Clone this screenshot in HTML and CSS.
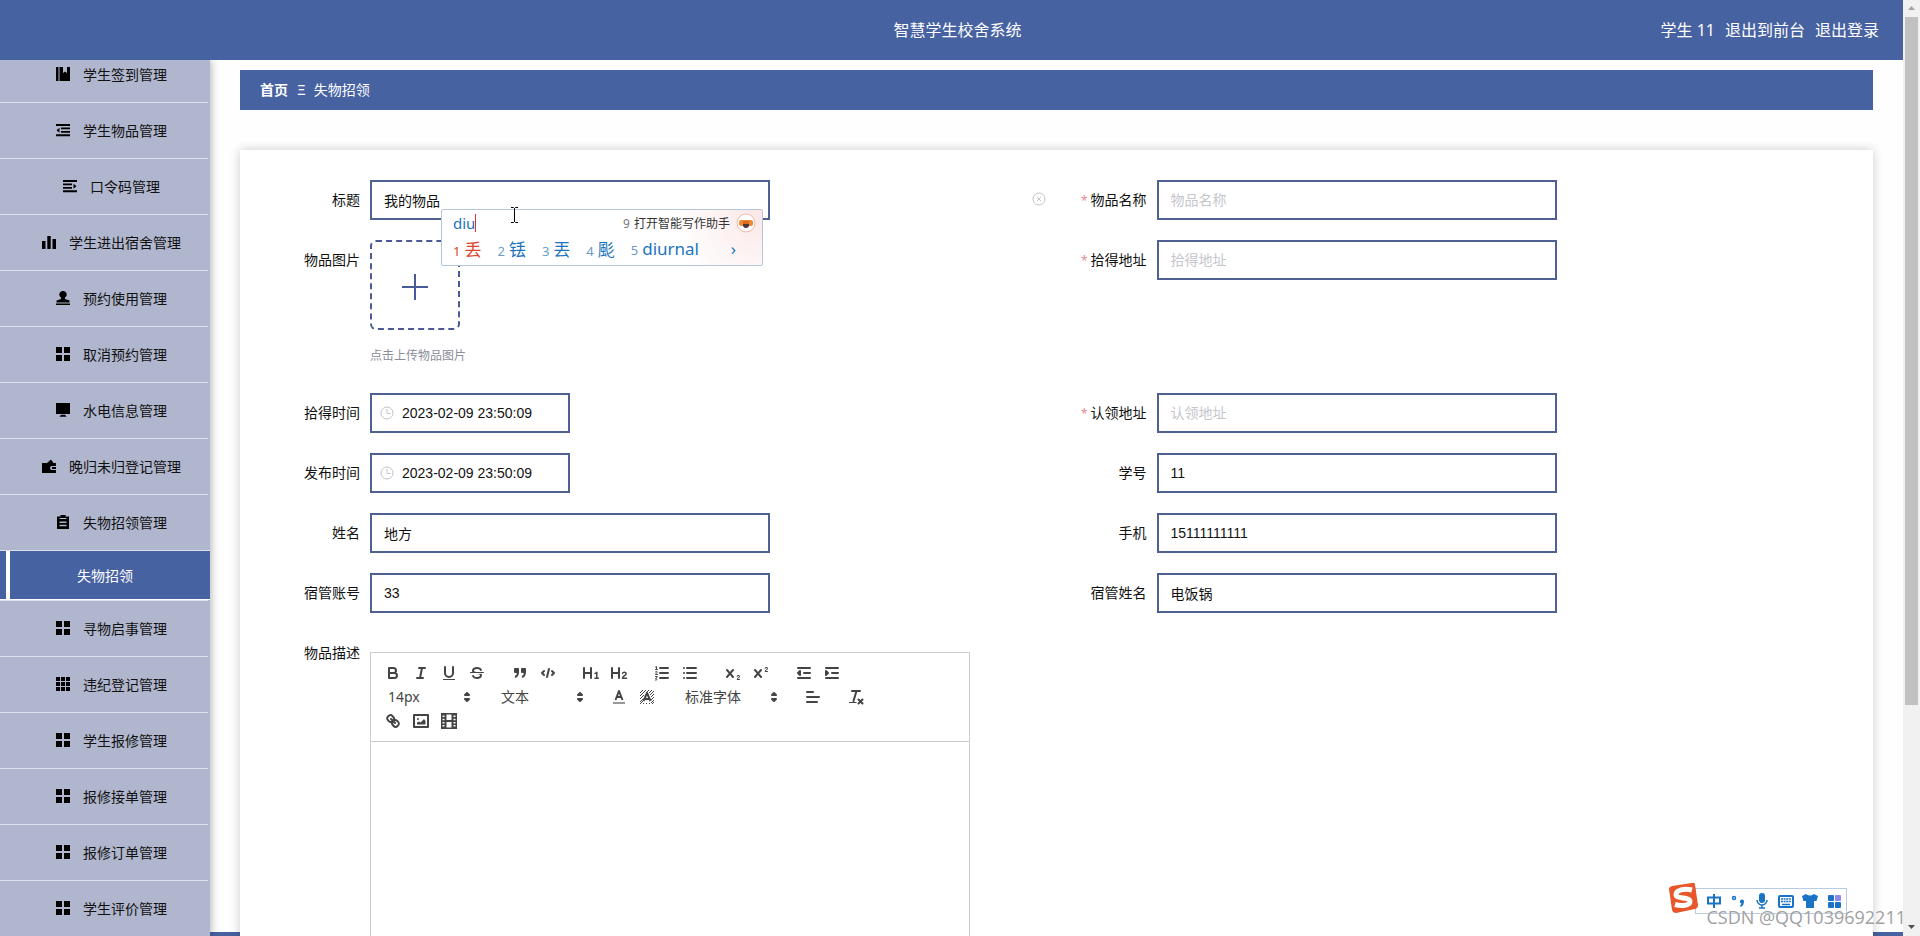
FILE: index.html
```
<!DOCTYPE html>
<html lang="zh-CN">
<head>
<meta charset="utf-8">
<title>智慧学生校舍系统</title>
<link rel="stylesheet" href="styles.css">
</head>
<body>
<svg class="defs" aria-hidden="true">
  <symbol id="grid4" viewBox="0 0 14 14"><path d="M0 0h6v6H0zM8 0h6v6H8zM0 8h6v6H0zM8 8h6v6H8z"/></symbol>
  <symbol id="clock" viewBox="0 0 14 14"><g fill="none" stroke="#c0c4cc"><circle cx="7" cy="7" r="6"/><path d="M7 3v4.500h3.500"/></g></symbol>
  <symbol id="updown" viewBox="0 0 18 18"><path d="M7 11l2 2 2-2zM7 7l2-2 2 2z" fill="#444" stroke="#444" stroke-width="2" stroke-linejoin="round"/></symbol>
</svg>
<div class="app">
  <div class="page">
    <header class="header">
      <span></span>
      <h1 class="title">智慧学生校舍系统</h1>
      <nav class="user"><span>学生 11</span><a href="#">退出到前台</a><a href="#">退出登录</a></nav>
    </header>
    <div class="body">
      <aside class="sidebar">
        <ul class="menu">
          <li><a class="item" href="#"><svg viewBox="0 0 14 14"><path d="M0 0h2.500v14H0zM3.500 0H7v6l2-1.500L11 6V0h3v14H3.500z"/></svg>学生签到管理</a></li>
          <li><a class="item" href="#"><svg viewBox="0 0 14 14"><path d="M0 1h14v2H0zM5 4.500h9v1.700H5zM5 8h9v1.700H5zM0 11.300h14v2H0zM3.500 4.700v5L.5 7.200z"/></svg>学生物品管理</a></li>
          <li><a class="item" href="#"><svg viewBox="0 0 14 14"><path d="M0 1h14v2H0zM0 4.500h9v1.700H0zM0 8h9v1.700H0zM0 11.300h14v2H0zM10.500 4.700v5l3-2.500z"/></svg>口令码管理</a></li>
          <li><a class="item" href="#"><svg viewBox="0 0 14 14"><path d="M0 6h3.500v8H0zM5.300 1h3.400v13H5.300zM10.500 4H14v10h-3.500z"/></svg>学生进出宿舍管理</a></li>
          <li><a class="item" href="#"><svg viewBox="0 0 14 14"><path d="M7 0a3.500 3.500 0 0 1 2 6.500L9 8l4.500 1.500V11.500H.5V9.500L5 8V6.500A3.500 3.500 0 0 1 7 0zM0 12.600h14V14H0z"/></svg>预约使用管理</a></li>
          <li><a class="item" href="#"><svg><use href="#grid4"/></svg>取消预约管理</a></li>
          <li><a class="item" href="#"><svg viewBox="0 0 14 14"><path d="M0 0h14v11H0zM5 11.800h4l1.500 2h-7z"/></svg>水电信息管理</a></li>
          <li><a class="item" href="#"><svg viewBox="0 0 14 14"><path d="M0 4h5l4-3.500L11.500 4H14v3H10a1.800 1.800 0 0 0 0 4h4v3H0zM10 8h4v2h-4z"/></svg>晚归未归登记管理</a></li>
          <li><a class="item" href="#"><svg viewBox="0 0 14 14"><path d="M4.500 0h5v1.500H13V14H1V1.500h3.500zM3.500 3v1h7V3zM3.500 6.500V8h7V6.500zM3.500 9.800v1.500h7V9.800z" fill-rule="evenodd"/></svg>失物招领管理</a>
            <a class="subitem" href="#" aria-current="page">失物招领</a></li>
          <li><a class="item" href="#"><svg><use href="#grid4"/></svg>寻物启事管理</a></li>
          <li><a class="item" href="#"><svg viewBox="0 0 14 14"><path d="M0 0h4v4H0zM5 0h4v4H5zM10 0h4v4h-4zM0 5h4v4H0zM5 5h4v4H5zM10 5h4v4h-4zM0 10h4v4H0zM5 10h4v4H5zM10 10h4v4h-4z"/></svg>违纪登记管理</a></li>
          <li><a class="item" href="#"><svg><use href="#grid4"/></svg>学生报修管理</a></li>
          <li><a class="item" href="#"><svg><use href="#grid4"/></svg>报修接单管理</a></li>
          <li><a class="item" href="#"><svg><use href="#grid4"/></svg>报修订单管理</a></li>
          <li><a class="item" href="#"><svg><use href="#grid4"/></svg>学生评价管理</a></li>
        </ul>
      </aside>
      <main class="main">
        <nav class="crumbs"><a href="#">首页</a><span class="sep">Ξ</span><span>失物招领</span></nav>
        <form class="card">
          <div class="field clearable">
            <label for="f1">标题</label><input id="f1" value="我的物品">
            <button type="button" class="clear" aria-label="清空"><svg viewBox="0 0 14 14"><g fill="none" stroke="#c0c4cc"><circle cx="7" cy="7" r="6"/><path d="M5 5l4 4M9 5l-4 4"/></g></svg></button>
          </div>
          <div class="field required"><label for="f2">物品名称</label><input id="f2" placeholder="物品名称"></div>
          <div class="field"><label for="f3">物品图片</label>
            <div class="upload">
              <button type="button" id="f3" class="drop"><svg viewBox="0 0 26 26"><path d="M13 0v26M0 13h26" stroke="#4a5a96" stroke-width="2"/></svg></button>
              <p class="tip">点击上传物品图片</p>
            </div>
          </div>
          <div class="field required"><label for="f4">拾得地址</label><input id="f4" placeholder="拾得地址"></div>
          <div class="field"><label for="f5">拾得时间</label><div class="date"><svg><use href="#clock"/></svg><input id="f5" value="2023-02-09 23:50:09"></div></div>
          <div class="field required"><label for="f6">认领地址</label><input id="f6" placeholder="认领地址"></div>
          <div class="field"><label for="f7">发布时间</label><div class="date"><svg><use href="#clock"/></svg><input id="f7" value="2023-02-09 23:50:09"></div></div>
          <div class="field"><label for="f8">学号</label><input id="f8" value="11"></div>
          <div class="field"><label for="f9">姓名</label><input id="f9" value="地方"></div>
          <div class="field"><label for="f10">手机</label><input id="f10" value="15111111111"></div>
          <div class="field"><label for="f11">宿管账号</label><input id="f11" value="33"></div>
          <div class="field"><label for="f12">宿管姓名</label><input id="f12" value="电饭锅"></div>
          <div class="field wide"><label for="f13">物品描述</label>
            <div class="editor">
              <div class="toolbar">
                <div class="group">
                  <button type="button" aria-label="粗体"><svg viewBox="0 0 18 18"><path class="s" d="M5 4h4.500a2.500 2.500 0 0 1 0 5H5zM5 9h5.500a2.500 2.500 0 0 1 0 5H5z"/></svg></button>
                  <button type="button" aria-label="斜体"><svg viewBox="0 0 18 18"><path class="s" d="M7 4h6M5 14h6M8 14l2-10"/></svg></button>
                  <button type="button" aria-label="下划线"><svg viewBox="0 0 18 18"><path class="s" d="M5 3v6a4 4 0 0 0 8 0V3"/><rect x="3" y="15" width="12" height="1"/></svg></button>
                  <button type="button" aria-label="删除线"><svg viewBox="0 0 18 18"><path class="s thin" d="M15.500 8.500h-13"/><path d="M9.007 8C6.542 7.791 6 7.519 6 6.500 6 5.792 7.283 5 9 5c1.571 0 2.765.679 2.969 1.309a1 1 0 0 0 1.900-.617C13.356 4.106 11.354 3 9 3 6.200 3 4 4.538 4 6.500a3.200 3.200 0 0 0 .5 1.843zM8.984 10C11.457 10.208 12 10.479 12 11.500 12 12.208 10.717 13 9 13c-1.571 0-2.765-.679-2.969-1.309a1 1 0 1 0-1.900.617C4.644 13.894 6.646 15 9 15c2.800 0 5-1.538 5-3.500a3.200 3.200 0 0 0-.5-1.843z"/></svg></button>
                </div>
                <div class="group">
                  <button type="button" aria-label="引用"><svg viewBox="0 0 18 18"><path stroke="#444" stroke-width="2" stroke-linejoin="round" d="M4 5h3v3H4zM11 5h3v3h-3z"/><path fill="none" stroke="#444" stroke-width="2" d="M7 8c0 4.031-3 5-3 5M14 8c0 4.031-3 5-3 5"/></svg></button>
                  <button type="button" aria-label="代码"><svg viewBox="0 0 18 18"><path class="s" d="M5 7L3 9l2 2M13 7l2 2-2 2M10 5l-2 8"/></svg></button>
                </div>
                <div class="group">
                  <button type="button" aria-label="一级标题"><svg viewBox="0 0 18 18"><path class="s" d="M2 4v10M9 4v10M2 9h7"/><path class="s mid" d="M13 9.500l1.800-1.200v5.900M13 14.200h3.400"/></svg></button>
                  <button type="button" aria-label="二级标题"><svg viewBox="0 0 18 18"><path class="s" d="M2 4v10M9 4v10M2 9h7"/><path class="s mid" d="M12.500 9.300c.7-1.700 3.700-1.500 3.700.400 0 1.800-3.500 2.300-3.700 4.500h4"/></svg></button>
                </div>
                <div class="group">
                  <button type="button" aria-label="有序列表"><svg viewBox="0 0 18 18"><path class="s" d="M7 4h8M7 9h8M7 14h8"/><path class="s thin" d="M2.500 5.500h2M3.500 5.500v-3l-1 .5M4.500 10.500h-2c0-1.500 1.900-1.500 1.900-2.300S3 7.200 2.500 7.800M2.500 14.600c1.800-.5 2.200 1.900 0 1.500M2.500 12.500h1.900l-1 1.500"/></svg></button>
                  <button type="button" aria-label="无序列表"><svg viewBox="0 0 18 18"><path class="s" d="M6 4h9M6 9h9M6 14h9M3 4h0M3 9h0M3 14h0"/></svg></button>
                </div>
                <div class="group">
                  <button type="button" aria-label="下标"><svg viewBox="0 0 18 18"><path d="M15.500 15h-1.639c.2-.500.9-.800 1.300-1.200.500-.4.800-.9.800-1.400 0-.8-.7-1.400-1.600-1.400-.8 0-1.400.400-1.700 1a.5.500 0 1 0 .87.500c.2-.3.500-.5.800-.5.400 0 .7.200.7.500 0 1-2.200 1.100-2.200 3a.5.500 0 0 0 .5.500h2.200a.5.500 0 0 0 0-1zM9.650 5.241a1 1 0 0 0-1.409.108L6 7.964 3.759 5.349a1 1 0 0 0-1.518 1.302L4.683 9.500l-2.442 2.849a1 1 0 0 0 1.518 1.302L6 11.036l2.241 2.615a1 1 0 1 0 1.518-1.302L7.317 9.500l2.442-2.849A1 1 0 0 0 9.650 5.241z"/></svg></button>
                  <button type="button" aria-label="上标"><svg viewBox="0 0 18 18"><path d="M15.500 7h-1.639c.2-.500.9-.800 1.300-1.200.500-.4.800-.9.800-1.400 0-.8-.7-1.400-1.600-1.400-.8 0-1.400.400-1.700 1a.5.500 0 1 0 .87.500c.2-.3.500-.5.800-.5.400 0 .7.200.7.500 0 1-2.200 1.100-2.200 3a.5.500 0 0 0 .5.500h2.200a.5.500 0 0 0 0-1zM9.650 5.241a1 1 0 0 0-1.409.108L6 7.964 3.759 5.349a1 1 0 0 0-1.518 1.302L4.683 9.500l-2.442 2.849a1 1 0 0 0 1.518 1.302L6 11.036l2.241 2.615a1 1 0 1 0 1.518-1.302L7.317 9.500l2.442-2.849A1 1 0 0 0 9.650 5.241z"/></svg></button>
                </div>
                <div class="group">
                  <button type="button" aria-label="减少缩进"><svg viewBox="0 0 18 18"><path class="s" d="M3 14h12M3 4h12M9 9h6M5 7v4L3 9z"/></svg></button>
                  <button type="button" aria-label="增加缩进"><svg viewBox="0 0 18 18"><path class="s" d="M3 14h12M3 4h12M9 9h6M3 7v4l2-2z"/></svg></button>
                </div>
                <div class="group"><button type="button" class="picker">14px<svg><use href="#updown"/></svg></button></div>
                <div class="group"><button type="button" class="picker">文本<svg><use href="#updown"/></svg></button></div>
                <div class="group">
                  <button type="button" aria-label="文字颜色"><svg viewBox="0 0 18 18"><path d="M3 15h12" stroke="#999" stroke-width="2"/><path fill="none" stroke="#444" stroke-width="2" stroke-linejoin="round" d="M5.500 12L9 3l3.500 9M12 9H6"/></svg></button>
                  <button type="button" aria-label="背景颜色"><svg viewBox="0 0 18 18"><path fill="none" stroke="#444" d="M2 5l3-3M2 8l6-6M2 11l4-4M2 14l3-3M2 16l3-3M8 5l3-3M11 5l3-3M13 6l3-3M12 7l4-4M13 9l3-3M13 12l3-3M13 15l3-3M5 16l1-1M8 16l1-1M11 16l1-1M14 16l2-2"/><path fill="none" stroke="#444" stroke-width="2" stroke-linejoin="round" d="M5.500 13L9 5l3.500 8M11.600 11H6.400"/></svg></button>
                </div>
                <div class="group"><button type="button" class="picker font">标准字体<svg><use href="#updown"/></svg></button></div>
                <div class="group"><button type="button" aria-label="对齐"><svg viewBox="0 0 18 18"><path class="s" d="M3 9h12M3 14h10M3 4h6"/></svg></button></div>
                <div class="group"><button type="button" aria-label="清除格式"><svg viewBox="0 0 18 18"><path class="s" d="M5 3h8M6.500 13l3-10M11.500 11.500l4 4M15.500 11.500l-4 4"/><rect x="2" y="14" width="7.500" height="1"/></svg></button></div>
                <div class="group">
                  <button type="button" aria-label="链接"><svg viewBox="0 0 18 18"><path class="s" d="M7 7l4 4M8.900 4.577a3.476 3.476 0 0 1 .360 4.679 3.476 3.476 0 0 1-4.679-.360C3.185 7.500 2.035 6.400 4.217 4.217s3.286-1.036 4.683.360zM13.423 9.100a3.476 3.476 0 0 0-4.679-.360 3.476 3.476 0 0 0 .360 4.679c1.392 1.392 2.500 2.542 4.679.360s1.036-3.283-.360-4.679z"/></svg></button>
                  <button type="button" aria-label="图片"><svg viewBox="0 0 18 18"><path class="s" d="M2 3h14v12H2z"/><circle cx="6" cy="7" r="1"/><path d="M5 12.500v-2l2-1 1.500 1L12 7l1.500 2v3.500z"/></svg></button>
                  <button type="button" aria-label="视频"><svg viewBox="0 0 18 18"><path fill-rule="evenodd" d="M1 1h16v16H1zM6.500 2.500v5.500h5V2.500zM6.500 10v5.500h5V10zM2.500 3.500V5h2V3.500zM2.500 6.700v1.500h2V6.700zM2.500 9.900v1.500h2V9.900zM2.500 13v1.500h2V13zM13.500 3.500V5h2V3.500zM13.500 6.700v1.500h2V6.700zM13.500 9.900v1.500h2V9.900zM13.500 13v1.500h2V13z"/></svg></button>
                </div>
              </div>
              <textarea id="f13" class="text"></textarea>
            </div>
          </div>
        </form>
      </main>
    </div>
  </div>
  <div class="scrollbar">
    <svg viewBox="0 0 17 17"><path d="M5 10l3.500-4 3.500 4z" fill="#a3a3a3"/></svg>
    <div class="thumb"></div>
    <svg viewBox="0 0 17 17"><path d="M5 6l3.500 4L12 6z" fill="#505050"/></svg>
  </div>
</div>

<div class="ime">
  <div class="ime-top"><span class="typed">diu</span><span class="assist"><span class="num">9</span>打开智能写作助手</span>
    <svg viewBox="0 0 20 20"><circle cx="10" cy="10" r="9" fill="#fff" stroke="#f0b8a8"/><rect x="3" y="7" width="14" height="6" rx="2" fill="#ef8a35"/><path d="M7 10h6v2a3 3 0 0 1-6 0z" fill="#4b3440"/><path d="M7 8h6v3H7z" fill="#d96a20"/></svg></div>
  <div class="ime-list"><span class="hot"><i>1</i>丢</span><span><i>2</i>铥</span><span><i>3</i>丟</span><span><i>4</i>颩</span><span><i>5</i>diurnal</span><b>›</b></div>
</div>
<svg class="pointer" viewBox="0 0 9 16"><path d="M1 .5h2.500l1 1 1-1H8M1 15.500h2.500l1-1 1 1H8M4.500 1v14" fill="none" stroke="#000"/></svg>

<div class="sogou">
  <svg class="logo" viewBox="0 0 32 32"><path d="M2 7Q2 5 5 4L25 1q3-1 3 2l3 20q0 3-3 4L9 31q-3 0-4-3z" fill="#e8562a"/><path d="M25 8C17 6 9 8 9 12.500c0 5 14 2 14 7 0 4-8 5-15 3" fill="none" stroke="#fff" stroke-width="5"/></svg>
  <div class="strip">
    <svg viewBox="0 0 16 16"><path d="M2 4.500h12v6H2zM8 1v14" fill="none" stroke="#1a73c4" stroke-width="2"/></svg>
    <svg viewBox="0 0 16 16"><circle cx="4" cy="5" r="1.500" fill="none" stroke="#1a73c4" stroke-width="1.500"/><path d="M10 8a2 2 0 0 1 4 1q0 3-3 5l-1-1 1.500-2.500A2 2 0 0 1 10 8z" fill="#1a73c4"/></svg>
    <svg viewBox="0 0 16 16"><rect x="5" y="0" width="6" height="10" rx="3" fill="#1a73c4"/><path d="M3 7a5 5 0 0 0 10 0M8 12v3M5 15h6" fill="none" stroke="#1a73c4" stroke-width="1.500"/></svg>
    <svg viewBox="0 0 16 16"><rect x="1" y="3" width="14" height="11" rx="1" fill="none" stroke="#1a73c4" stroke-width="2"/><path d="M3 6h10M3 8.500h10" stroke="#1a73c4" stroke-width="1.500" stroke-dasharray="2 .6"/><path d="M4 11.500h8" stroke="#1a73c4" stroke-width="1.500"/></svg>
    <svg viewBox="0 0 16 16"><path d="M0 3l4-2q4 3 8 0l4 2-1.500 5H12v7H4V8H1.500z" fill="#1a73c4"/></svg>
    <svg viewBox="0 0 16 16"><g fill="#1a73c4"><rect x="2" y="2" width="6" height="6" rx="1"/><rect x="2" y="9" width="6" height="6" rx="1"/><rect x="9" y="9" width="6" height="6" rx="1"/></g><rect x="9" y="2" width="6" height="6" rx="1" fill="#8d8be8"/></svg>
  </div>
</div>
<div class="watermark">CSDN @QQ1039692211</div>
</body>
</html>
```
FILE: styles.css
```
* { box-sizing: border-box; }
body, h1, p, ul { margin: 0; padding: 0; }
body {
  font-family: "Noto Sans", "Noto Sans CJK SC", sans-serif;
  font-size: 14px;
  color: #111;
  position: relative;
  height: 100vh;
  overflow: hidden;
}
a { color: inherit; text-decoration: none; }
button { font: inherit; color: inherit; background: none; border: 0; padding: 0; }
.defs { position: absolute; width: 0; height: 0; }

.app { display: flex; height: 100vh; overflow: hidden; }
.page { flex: 1; min-width: 0; display: flex; flex-direction: column; }

.header {
  flex: none;
  height: 60px;
  padding: 0 24px;
  display: grid;
  grid-template-columns: 1fr auto 1fr;
  align-items: center;
  background: #4762a1;
  color: #fff;
  font-size: 16px;
  line-height: 20px;
  position: relative;
  z-index: 2;
}
.title { font-size: 16px; font-weight: 400; padding-left: 12px; }
.user { display: flex; gap: 10px; justify-content: flex-end; }

.body { flex: 1; min-height: 0; display: flex; }
.sidebar {
  width: 210px;
  flex: none;
  display: flex;
  flex-direction: column;
  justify-content: flex-end;
  background: #b0b6cd;
  box-shadow: 1px 0 8px rgba(0, 0, 0, .3);
  z-index: 1;
}
.menu { list-style: none; }
.item {
  display: flex;
  align-items: center;
  justify-content: center;
  gap: 13px;
  height: 56px;
  margin-right: 2px;
  padding: 0 0 2px 15px;
  border-top: 1px solid #dde1ee;
}
.item svg { width: 14px; height: 14px; }
.subitem {
  display: flex;
  align-items: center;
  justify-content: center;
  height: 50px;
  color: #fff;
  background: linear-gradient(90deg, #4762a1 6px, #fff 6px, #fff 10px, #4762a1 10px);
  border-top: 1px solid #dde1ee;
  border-bottom: 1px solid #fff;
}

.main {
  flex: 1;
  min-width: 0;
  padding: 10px 30px 0;
  background: #fefefe;
  border-bottom: 4px solid #4762a1;
}
.crumbs {
  display: flex;
  align-items: center;
  height: 40px;
  padding: 0 20px 2px;
  background: #4762a1;
  color: #fff;
}
.crumbs a { font-weight: 700; }
.sep { margin: 0 8px 0 9px; font-size: 14px; }

.card {
  margin-top: 40px;
  padding: 30px;
  background: #fff;
  box-shadow: 0 0 10px rgba(0, 0, 0, .2);
  display: grid;
  grid-template-columns: 1fr 1fr;
  row-gap: 20px;
}
.field { display: flex; align-items: flex-start; }
.field label {
  width: 100px;
  height: 40px;
  padding-right: 10px;
  text-align: right;
  line-height: 40px;
  flex: none;
}
.required label::before { content: "*"; color: #e58a92; margin-right: 3px; font-size: 12px; line-height: 1; }
.field input {
  width: 400px;
  height: 40px;
  padding: 0 12px;
  border: 2px solid #4f6193;
  background: #fff;
  color: #111;
  font-family: "Liberation Sans", "Noto Sans CJK SC", sans-serif;
  font-size: 14px;
}
.field input::placeholder { color: #c4c6cc; }
.clear { margin: 12px 11px 0 auto; height: 14px; }
.clear svg { display: block; width: 14px; height: 14px; }
.drop {
  display: flex;
  align-items: center;
  justify-content: center;
  width: 90px;
  height: 90px;
  padding-top: 4px;
  border: 2px dashed #4a5a96;
  border-radius: 6px;
}
.drop svg { width: 26px; height: 26px; }
.tip { margin-top: 16px; font-size: 12px; line-height: 20px; padding-bottom: 7px; color: #8b8d9b; }
.date { display: flex; align-items: center; position: relative; }
.date svg { position: absolute; left: 10px; width: 14px; height: 14px; }
.date input { width: 200px; padding-left: 30px; }

.wide { grid-column: 1 / -1; }
.editor { width: 600px; margin-top: 19px; border: 1px solid #ccc; }
.toolbar {
  display: flex;
  flex-wrap: wrap;
  padding: 8px;
  border-bottom: 1px solid #ccc;
  color: #444;
}
.group { display: flex; margin-right: 15px; }
.group button { width: 28px; height: 24px; padding: 3px 5px; }
.group button svg { display: block; width: 18px; height: 18px; fill: #444; }
.group .s { fill: none; stroke: #444; stroke-width: 2; stroke-linecap: round; stroke-linejoin: round; }
.group .thin { stroke-width: 1; }
.group .mid { stroke-width: 1.5; }
.group .picker {
  display: flex;
  align-items: center;
  justify-content: space-between;
  width: 98px;
  padding: 0 1px 0 9px;
  line-height: 18px;
}
.group .picker.font { width: 108px; }
.text { display: block; width: 100%; height: 400px; border: 0; resize: none; }

.scrollbar {
  width: 17px;
  flex: none;
  display: flex;
  flex-direction: column;
  background: #f1f1f1;
}
.scrollbar svg { width: 17px; height: 17px; flex: none; }
.thumb { height: 73.5%; margin: 0 2px; background: #c1c1c1; }
.thumb + svg { margin-top: auto; }

.ime {
  position: absolute;
  left: 441px;
  top: 209px;
  width: 322px;
  height: 57px;
  padding: 0 6px 0 11px;
  border: 1px solid #b4c6dc;
  border-radius: 2px;
  background: radial-gradient(circle at 100% 0, #fbe6e6, #fff 90px);
  color: #1c73c0;
}
.ime-top { display: flex; align-items: center; height: 26px; }
.ime-top svg { width: 20px; height: 20px; margin-left: 6px; }
.typed { font-size: 15px; line-height: 18px; border-right: 1px solid #d33; }
.assist { margin-left: auto; font-size: 12px; color: #333; }
.num { margin-right: 4px; color: #777; }
.ime-list { display: flex; align-items: center; gap: 16px; height: 24px; font-size: 17px; }
.ime-list i { margin-right: 4px; font-style: normal; font-size: 13px; color: #6b9cc4; }
.ime-list .hot, .ime-list .hot i { color: #e0452c; }
.ime-list b { margin: 0 20px 0 auto; font-weight: 400; }
.pointer { position: absolute; left: 510px; top: 207px; width: 9px; height: 16px; }

.sogou { position: absolute; right: 73px; bottom: 22px; display: flex; align-items: flex-end; }
.logo { width: 32px; height: 32px; margin-right: -4px; z-index: 1; }
.strip {
  display: flex;
  align-items: center;
  gap: 8px;
  height: 26px;
  padding: 0 4px 0 10px;
  border: 1px solid #b9cbe0;
  background: #fff;
}
.strip svg { width: 16px; height: 16px; }
.watermark {
  position: absolute;
  right: 14px;
  bottom: 7px;
  font-family: "Open Sans", sans-serif;
  font-size: 18px;
  line-height: 24px;
  color: #a0a0a2;
  text-shadow: 0 0 1px #fff;
}
```
